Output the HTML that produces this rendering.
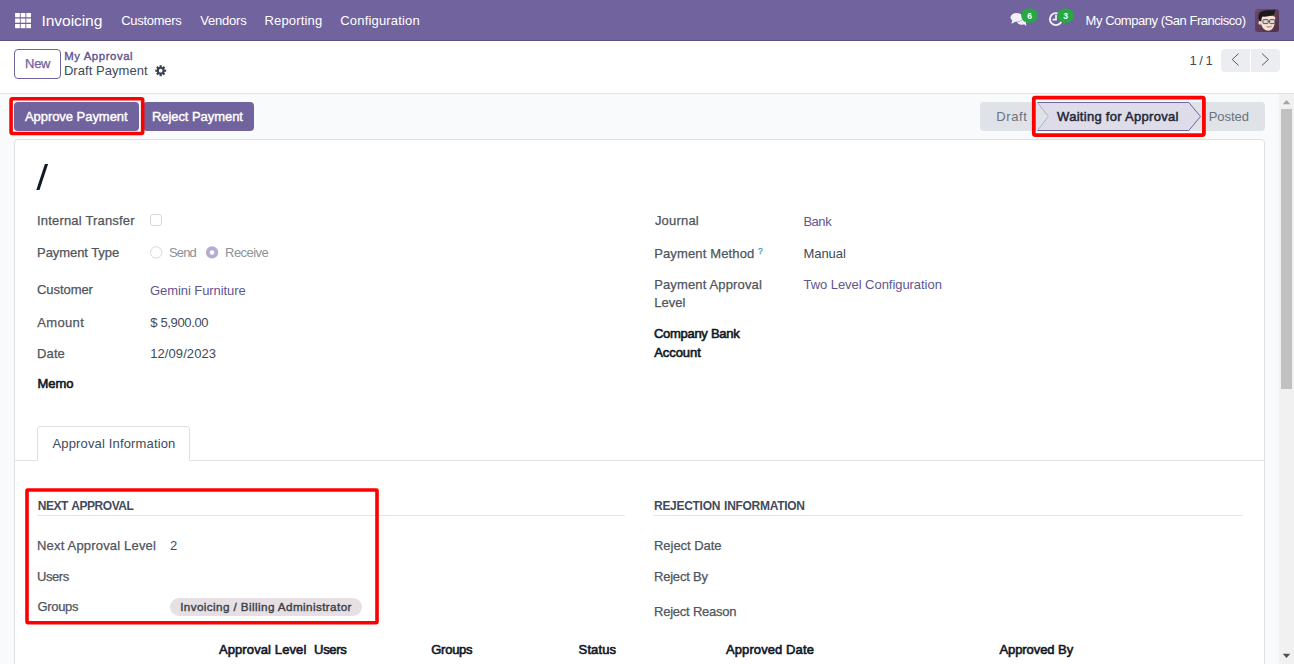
<!DOCTYPE html>
<html><head><meta charset="utf-8"><title>Draft Payment</title>
<style>
html,body{margin:0;padding:0;}
body{width:1294px;height:664px;overflow:hidden;position:relative;background:#f9fafb;font-family:"Liberation Sans",sans-serif;font-size:13px;color:#374151;}
.a{position:absolute;box-sizing:border-box;}
.t{position:absolute;white-space:pre;line-height:20px;height:20px;}
svg{position:absolute;overflow:visible;}

</style></head>
<body>
<!-- navbar -->
<div class="a" style="left:0;top:0;width:1294px;height:40px;background:#71639e;"></div>
<div class="a" style="left:0;top:40px;width:1294px;height:1px;background:#5d5283;"></div>
<!-- apps grid icon -->
<svg style="left:0;top:0" width="40" height="40" viewBox="0 0 40 40">
 <g fill="#fff">
  <rect x="15.1" y="13" width="4.7" height="4.2"/><rect x="20.7" y="13" width="4.7" height="4.2"/><rect x="26.3" y="13" width="4.7" height="4.2"/>
  <rect x="15.1" y="18.5" width="4.7" height="4.2"/><rect x="20.7" y="18.5" width="4.7" height="4.2"/><rect x="26.3" y="18.5" width="4.7" height="4.2"/>
  <rect x="15.1" y="24" width="4.7" height="4.2"/><rect x="20.7" y="24" width="4.7" height="4.2"/><rect x="26.3" y="24" width="4.7" height="4.2"/>
 </g>
</svg>
<!-- chat icon + clock icon + badges -->
<svg style="left:1000px;top:0" width="90" height="40" viewBox="0 0 90 40">
 <!-- comments icon -->
 <g fill="#f3f1f8">
  <ellipse cx="21.7" cy="21.3" rx="4.8" ry="3.5"/>
  <path d="M23.4 23.6 L26.3 26.2 L25.9 22.2 Z"/>
  <g stroke="#71639e" stroke-width="1.1" paint-order="stroke">
   <ellipse cx="16.6" cy="17.3" rx="6.1" ry="4.4"/>
  </g>
  <path d="M12.4 19.8 L11.4 23.8 L16 21.4 Z"/>
 </g>
 <!-- clock icon -->
 <circle cx="55.9" cy="19.1" r="6" fill="none" stroke="#f3f1f8" stroke-width="1.9"/>
 <path d="M56 14.8 V19.6 H52.6" fill="none" stroke="#f3f1f8" stroke-width="1.7"/>
 <!-- badges -->
 <rect x="21.2" y="8.4" width="16.9" height="14.4" rx="7.2" fill="#28a745"/>
 <rect x="57.2" y="8.4" width="16.7" height="14.4" rx="7.2" fill="#28a745"/>
</svg>
<div class="t" style="left:1021.2px;top:6.1px;width:16.9px;text-align:center;font-size:8.5px;font-weight:700;color:#fff;">6</div>
<div class="t" style="left:1057.2px;top:6.1px;width:16.7px;text-align:center;font-size:8.5px;font-weight:700;color:#fff;">3</div>
<!-- avatar -->
<svg style="left:1255px;top:9px" width="24" height="23" viewBox="0 0 24 23">
 <defs><linearGradient id="avbg" x1="0" y1="0" x2="1" y2="1"><stop offset="0" stop-color="#6d4a68"/><stop offset="1" stop-color="#4f2f4b"/></linearGradient>
 <clipPath id="avclip"><rect x="0" y="0" width="24" height="23" rx="3"/></clipPath></defs>
 <g clip-path="url(#avclip)">
  <rect width="24" height="23" fill="url(#avbg)"/>
  <ellipse cx="5" cy="13.8" rx="1.6" ry="2" fill="#f3d3c2"/>
  <path d="M5.6 8 Q5.2 16.5 8.8 20 Q12.6 23.4 16.6 20.4 Q20.4 17 20.2 8 Q13 3.8 5.6 8 Z" fill="#f9e0d2"/>
  <path d="M3.4 7.6 Q3 2.6 9.6 1.6 Q14.6 1 17.4 1.4 Q19.4 0.2 20 1.2 Q20.6 4.8 17.4 6.4 Q12.4 8 7.4 7.6 Q6.2 9.4 6.4 12.6 L4.8 12 Q3.2 10.2 3.4 7.6 Z" fill="#1d1a1c"/>
  <rect x="8" y="10.6" width="5.2" height="4" rx="0.8" fill="#ded6d2" stroke="#4a4a4a" stroke-width="0.9"/>
  <rect x="14.6" y="10.6" width="5.2" height="4" rx="0.8" fill="#ded6d2" stroke="#4a4a4a" stroke-width="0.9"/>
  <path d="M13.2 12 H14.6" stroke="#4a4a4a" stroke-width="0.8"/>
  <path d="M11.6 17.6 Q14 19.4 16.6 17.2 Q14 18 11.6 17.6 Z" fill="#fff" stroke="#9a5a4a" stroke-width="0.5"/>
 </g>
</svg>

<!-- control panel -->
<div class="a" style="left:0;top:41px;width:1294px;height:52px;background:#fff;"></div>
<div class="a" style="left:0;top:93px;width:1294px;height:1px;background:#dfe2e6;"></div>
<div class="a" style="left:14px;top:49px;width:47px;height:30px;border:1px solid #71639e;border-radius:4px;background:#fff;"></div>
<!-- gear -->
<svg style="left:154.8px;top:64.7px" width="11.4" height="11.4" viewBox="0 0 12 12" preserveAspectRatio="none">
 <path fill="#3b424f" fill-rule="evenodd" d="M4.91 1.89 L4.81 0.27 L7.19 0.27 L7.09 1.89 L8.13 2.32 L9.21 1.11 L10.89 2.79 L9.68 3.87 L10.11 4.91 L11.73 4.81 L11.73 7.19 L10.11 7.09 L9.68 8.13 L10.89 9.21 L9.21 10.89 L8.13 9.68 L7.09 10.11 L7.19 11.73 L4.81 11.73 L4.91 10.11 L3.87 9.68 L2.79 10.89 L1.11 9.21 L2.32 8.13 L1.89 7.09 L0.27 7.19 L0.27 4.81 L1.89 4.91 L2.32 3.87 L1.11 2.79 L2.79 1.11 L3.87 2.32 Z M7.95 6.00 A1.95 1.95 0 1 0 4.05 6.00 A1.95 1.95 0 1 0 7.95 6.00 Z"/>
</svg>
<!-- pager -->
<div class="a" style="left:1221px;top:49px;width:29px;height:23px;background:#ebedf0;border-radius:4px 0 0 4px;"></div>
<div class="a" style="left:1251px;top:49px;width:29px;height:23px;background:#ebedf0;border-radius:0 4px 4px 0;"></div>
<svg style="left:1221px;top:49px" width="60" height="23" viewBox="0 0 60 23">
 <path d="M17.6 4.6 L11.2 10.5 L17.6 16.4" fill="none" stroke="#565d68" stroke-width="1"/>
 <path d="M41 4.6 L47.4 10.5 L41 16.4" fill="none" stroke="#565d68" stroke-width="1"/>
</svg>

<!-- action buttons -->
<div class="a" style="left:14px;top:102px;width:125px;height:29px;background:#71639e;border-radius:4px;"></div>
<div class="a" style="left:143px;top:102px;width:111px;height:29px;background:#71639e;border-radius:4px;"></div>

<!-- statusbar -->
<div class="a" style="left:980px;top:102px;width:285px;height:29px;background:#dfe2e6;border-radius:4px;"></div>
<svg style="left:980px;top:96px" width="290" height="42" viewBox="980 96 290 42">
 <path d="M1037.5 102.5 H1188.8 L1200.5 116.5 L1188.8 130.5 H1037.5 L1048.4 116.5 Z" fill="#dfdcea"/>
 <path d="M1037.5 102.5 L1048.4 116.5 L1037.5 130.5" fill="none" stroke="#b3adcf" stroke-width="1"/>
 <path d="M1037.5 102.5 H1188.8 L1200.5 116.5 L1188.8 130.5 H1037.5" fill="none" stroke="#71639e" stroke-width="1"/>
</svg>

<!-- scrollbar -->
<div class="a" style="left:1279px;top:94px;width:15px;height:570px;background:#f1f1f1;"></div>
<div class="a" style="left:1281px;top:109px;width:11px;height:280px;background:#c1c1c1;"></div>
<svg style="left:1279px;top:94px" width="15" height="570" viewBox="0 0 15 570">
 <path d="M3.8 10.2 L7.5 6 L11.2 10.2 Z" fill="#a3a3a3"/>
 <path d="M3.8 559.8 L7.5 564 L11.2 559.8 Z" fill="#505050"/>
</svg>

<!-- sheet -->
<div class="a" style="left:14px;top:139px;width:1251px;height:540px;background:#fff;border:1px solid #dee2e6;border-radius:4px;"></div>
<!-- title slash -->
<svg style="left:30px;top:160px" width="30" height="36" viewBox="30 160 30 36">
 <path d="M44.9 164 H48.1 L39.5 190 H36.3 Z" fill="#111827"/>
</svg>
<!-- checkbox -->
<div class="a" style="left:150px;top:214px;width:12px;height:12px;border:1px solid #d5d7db;border-radius:3px;background:#fff;"></div>
<!-- radios -->
<svg style="left:148px;top:244px" width="74" height="18" viewBox="148 244 74 18">
 <circle cx="156.15" cy="252.45" r="5.7" fill="#fff" stroke="#d5d7db" stroke-width="1"/>
 <circle cx="212.05" cy="252.45" r="6.15" fill="#b4add2"/>
 <circle cx="212.05" cy="252.5" r="2.25" fill="#fff"/>
</svg>

<!-- notebook tab -->
<div class="a" style="left:15px;top:460px;width:1249px;height:1px;background:#dee2e6;"></div>
<div class="a" style="left:37px;top:426px;width:153px;height:35px;border:1px solid #dee2e6;border-bottom:1px solid #fff;border-radius:4px 4px 0 0;background:#fff;"></div>

<!-- section separators -->
<div class="a" style="left:37px;top:515px;width:588px;height:1px;background:#e3e5e8;"></div>
<div class="a" style="left:654px;top:515px;width:588px;height:1px;background:#e3e5e8;"></div>
<!-- tag pill -->
<div class="a" style="left:170px;top:598px;width:192px;height:18px;border-radius:9px;background:#e7e0e2;"></div>

<!-- red annotation rectangles -->
<svg style="left:0;top:0" width="1294" height="664" viewBox="0 0 1294 664">
 <g fill="none" stroke="#ff0000" stroke-width="3.8">
  <rect x="11.07" y="98.8" width="131.63" height="34.7" rx="1.5" stroke-width="3.6"/>
  <rect x="1033.8" y="97.6" width="170.1" height="37.5" rx="1.5"/>
  <rect x="27.0" y="490" width="350.0" height="132.7" rx="0.6" stroke-width="3.6"/>
 </g>
</svg>

<!-- text -->
<div class="t" style="left:41.53px;top:11.00px;font-size:15.6px;font-weight:400;color:#fff;letter-spacing:-0.087px;transform:scaleY(0.92);transform-origin:0 15px;">Invoicing</div>
<div class="t" style="left:121.18px;top:11.00px;font-size:13px;font-weight:400;color:#fff;letter-spacing:-0.283px;">Customers</div>
<div class="t" style="left:200.28px;top:11.00px;font-size:13px;font-weight:400;color:#fff;letter-spacing:-0.210px;">Vendors</div>
<div class="t" style="left:264.48px;top:11.00px;font-size:13px;font-weight:400;color:#fff;letter-spacing:0.178px;">Reporting</div>
<div class="t" style="left:340.28px;top:11.00px;font-size:13px;font-weight:400;color:#fff;letter-spacing:0.180px;">Configuration</div>
<div class="t" style="left:1085.58px;top:11.00px;font-size:13px;font-weight:400;color:#fff;letter-spacing:-0.462px;">My Company (San Francisco)</div>
<div class="t" style="left:25.00px;top:54.00px;font-size:13px;font-weight:400;-webkit-text-stroke:0.25px currentColor;color:#71639e;letter-spacing:-0.250px;">New</div>
<div class="t" style="left:64.27px;top:46.00px;font-size:11.4px;font-weight:400;-webkit-text-stroke:0.38px currentColor;color:#5f5590;letter-spacing:0.571px;">My Approval</div>
<div class="t" style="left:63.88px;top:61.00px;font-size:13px;font-weight:400;color:#414a58;letter-spacing:0.052px;">Draft Payment</div>
<div class="t" style="left:1189.50px;top:51.00px;font-size:13px;font-weight:400;color:#414a58;letter-spacing:-0.524px;">1 / 1</div>
<div class="t" style="left:24.89px;top:107.00px;font-size:13px;font-weight:400;-webkit-text-stroke:0.38px currentColor;color:#fff;letter-spacing:-0.040px;">Approve Payment</div>
<div class="t" style="left:151.90px;top:107.00px;font-size:13px;font-weight:400;-webkit-text-stroke:0.38px currentColor;color:#fff;letter-spacing:-0.054px;">Reject Payment</div>
<div class="t" style="left:996.18px;top:107.00px;font-size:13px;font-weight:400;color:#6b7280;letter-spacing:0.630px;">Draft</div>
<div class="t" style="left:1057.10px;top:107.00px;font-size:13px;font-weight:400;-webkit-text-stroke:0.5px currentColor;color:#1f2937;letter-spacing:0.285px;">Waiting for Approval</div>
<div class="t" style="left:1208.68px;top:107.00px;font-size:13px;font-weight:400;color:#6b7280;letter-spacing:-0.056px;">Posted</div>
<div class="t" style="left:37.06px;top:211.00px;font-size:13px;font-weight:400;-webkit-text-stroke:0.25px currentColor;color:#50555d;letter-spacing:0.180px;">Internal Transfer</div>
<div class="t" style="left:37.10px;top:243.00px;font-size:13px;font-weight:400;-webkit-text-stroke:0.25px currentColor;color:#50555d;letter-spacing:-0.075px;">Payment Type</div>
<div class="t" style="left:37.02px;top:280.00px;font-size:13px;font-weight:400;-webkit-text-stroke:0.25px currentColor;color:#50555d;letter-spacing:-0.062px;">Customer</div>
<div class="t" style="left:37.28px;top:313.00px;font-size:13px;font-weight:400;-webkit-text-stroke:0.25px currentColor;color:#50555d;letter-spacing:0.346px;">Amount</div>
<div class="t" style="left:37.10px;top:344.00px;font-size:13px;font-weight:400;-webkit-text-stroke:0.25px currentColor;color:#50555d;letter-spacing:0.100px;">Date</div>
<div class="t" style="left:37.44px;top:374.00px;font-size:13px;font-weight:400;-webkit-text-stroke:0.6px currentColor;color:#111827;letter-spacing:-0.046px;">Memo</div>
<div class="t" style="left:168.90px;top:243.00px;font-size:13px;font-weight:400;color:#8d9198;letter-spacing:-0.833px;">Send</div>
<div class="t" style="left:225.08px;top:243.00px;font-size:13px;font-weight:400;color:#8d9198;letter-spacing:-0.570px;">Receive</div>
<div class="t" style="left:150.08px;top:281.00px;font-size:13px;font-weight:400;color:#5f5590;letter-spacing:-0.079px;">Gemini Furniture</div>
<div class="t" style="left:150.33px;top:313.00px;font-size:13px;font-weight:400;color:#414a58;letter-spacing:-0.356px;">$ 5,900.00</div>
<div class="t" style="left:150.20px;top:344.00px;font-size:13px;font-weight:400;color:#414a58;letter-spacing:0.085px;">12/09/2023</div>
<div class="t" style="left:654.91px;top:211.00px;font-size:13px;font-weight:400;-webkit-text-stroke:0.25px currentColor;color:#50555d;letter-spacing:0.199px;">Journal</div>
<div class="t" style="left:654.20px;top:244.00px;font-size:13px;font-weight:400;-webkit-text-stroke:0.25px currentColor;color:#50555d;letter-spacing:0.137px;">Payment Method</div>
<div class="t" style="left:757.89px;top:241.00px;font-size:8.5px;font-weight:400;-webkit-text-stroke:0.25px currentColor;color:#3b93b9;letter-spacing:0.000px;">?</div>
<div class="t" style="left:654.20px;top:275.00px;font-size:13px;font-weight:400;-webkit-text-stroke:0.25px currentColor;color:#50555d;letter-spacing:0.143px;">Payment Approval</div>
<div class="t" style="left:654.20px;top:293.00px;font-size:13px;font-weight:400;-webkit-text-stroke:0.25px currentColor;color:#50555d;letter-spacing:0.045px;">Level</div>
<div class="t" style="left:653.94px;top:324.00px;font-size:13px;font-weight:400;-webkit-text-stroke:0.6px currentColor;color:#111827;letter-spacing:-0.288px;">Company Bank</div>
<div class="t" style="left:654.20px;top:343.00px;font-size:13px;font-weight:400;-webkit-text-stroke:0.6px currentColor;color:#111827;letter-spacing:-0.066px;">Account</div>
<div class="t" style="left:803.38px;top:212.00px;font-size:13px;font-weight:400;color:#5f5590;letter-spacing:-0.451px;">Bank</div>
<div class="t" style="left:803.38px;top:244.00px;font-size:13px;font-weight:400;color:#414a58;letter-spacing:-0.016px;">Manual</div>
<div class="t" style="left:803.47px;top:275.00px;font-size:13px;font-weight:400;color:#5f5590;letter-spacing:-0.049px;">Two Level Configuration</div>
<div class="t" style="left:52.51px;top:434.00px;font-size:13px;font-weight:400;color:#414a58;letter-spacing:0.151px;">Approval Information</div>
<div class="t" style="left:37.70px;top:496.00px;font-size:12px;font-weight:700;color:#434b5a;letter-spacing:-0.458px;word-spacing:1px;">NEXT APPROVAL</div>
<div class="t" style="left:654.00px;top:496.00px;font-size:12px;font-weight:700;color:#434b5a;letter-spacing:-0.290px;word-spacing:1px;">REJECTION INFORMATION</div>
<div class="t" style="left:37.00px;top:536.00px;font-size:13px;font-weight:400;-webkit-text-stroke:0.25px currentColor;color:#50555d;letter-spacing:0.183px;">Next Approval Level</div>
<div class="t" style="left:170.08px;top:536.00px;font-size:13px;font-weight:400;color:#414a58;letter-spacing:0.000px;">2</div>
<div class="t" style="left:37.00px;top:567.00px;font-size:13px;font-weight:400;-webkit-text-stroke:0.25px currentColor;color:#50555d;letter-spacing:-0.438px;">Users</div>
<div class="t" style="left:37.52px;top:597.00px;font-size:13px;font-weight:400;-webkit-text-stroke:0.25px currentColor;color:#50555d;letter-spacing:-0.347px;">Groups</div>
<div class="t" style="left:180.20px;top:597.00px;font-size:11.7px;font-weight:400;-webkit-text-stroke:0.38px currentColor;color:#3a3f48;letter-spacing:0.398px;">Invoicing / Billing Administrator</div>
<div class="t" style="left:654.00px;top:536.00px;font-size:13px;font-weight:400;-webkit-text-stroke:0.25px currentColor;color:#50555d;letter-spacing:-0.032px;">Reject Date</div>
<div class="t" style="left:654.00px;top:567.00px;font-size:13px;font-weight:400;-webkit-text-stroke:0.25px currentColor;color:#50555d;letter-spacing:-0.214px;">Reject By</div>
<div class="t" style="left:654.00px;top:602.00px;font-size:13px;font-weight:400;-webkit-text-stroke:0.25px currentColor;color:#50555d;letter-spacing:-0.225px;">Reject Reason</div>
<div class="t" style="left:218.90px;top:640.00px;font-size:13px;font-weight:400;-webkit-text-stroke:0.6px currentColor;color:#111827;letter-spacing:0.111px;">Approval Level</div>
<div class="t" style="left:314.08px;top:640.00px;font-size:13px;font-weight:400;-webkit-text-stroke:0.6px currentColor;color:#111827;letter-spacing:-0.302px;">Users</div>
<div class="t" style="left:431.21px;top:640.00px;font-size:13px;font-weight:400;-webkit-text-stroke:0.6px currentColor;color:#111827;letter-spacing:-0.245px;">Groups</div>
<div class="t" style="left:578.60px;top:640.00px;font-size:13px;font-weight:400;-webkit-text-stroke:0.6px currentColor;color:#111827;letter-spacing:0.117px;">Status</div>
<div class="t" style="left:726.00px;top:640.00px;font-size:13px;font-weight:400;-webkit-text-stroke:0.6px currentColor;color:#111827;letter-spacing:0.095px;">Approved Date</div>
<div class="t" style="left:999.40px;top:640.00px;font-size:13px;font-weight:400;-webkit-text-stroke:0.6px currentColor;color:#111827;letter-spacing:-0.067px;">Approved By</div>
</body></html>
